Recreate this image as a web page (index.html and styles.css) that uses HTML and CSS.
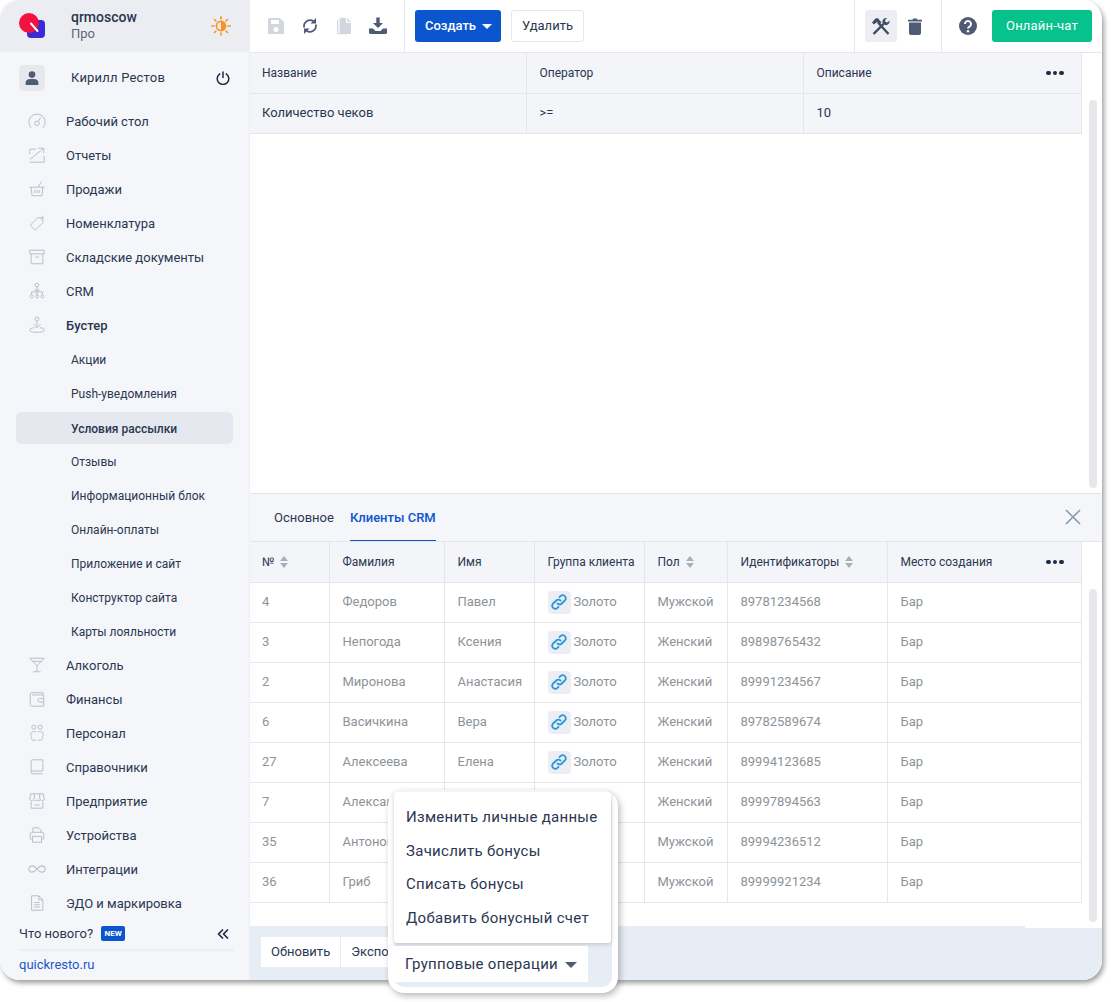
FILE: index.html
```html
<!DOCTYPE html>
<html lang="ru">
  <head>
    <meta charset="UTF-8" />
    <title>Условия рассылки</title>
    <link rel="stylesheet" href="styles.css">
  </head>
  <body>
    <div class="app">
      <aside class="sidebar">
        <div class="brand">
          <svg class="logo" width="30" height="30" viewBox="0 0 30 30">
            <rect x="8" y="8" width="18" height="18" rx="4" fill="#3a2bd6"/>
            <circle cx="10" cy="11" r="10" fill="#f3123f"/>
            <path d="M12 11.500 18.500 19" stroke="#fff" stroke-width="2" stroke-linecap="round"/>
          </svg>
          <div class="brand-text">
            <div class="brand-name">qrmoscow</div>
            <div class="brand-plan">Про</div>
          </div>
          <svg class="sun" width="20" height="20" viewBox="0 0 20 20">
            <circle cx="10" cy="10" r="4.600" fill="none" stroke="#f7931e" stroke-width="1.600"/>
            <path d="M10 5.400a4.600 4.600 0 0 1 0 9.200z" fill="#f7931e"/>
            <path d="M10 .8v2.200M10 17v2.200M.8 10H3M17 10h2.200M3.500 3.500 5 5M15 15l1.500 1.500M3.500 16.500 5 15M15 5l1.500-1.500" stroke="#f7931e" stroke-width="1.600" stroke-linecap="round"/>
          </svg>
        </div>
        <div class="user">
          <div class="avatar">
            <svg width="14" height="14" viewBox="0 0 14 14" fill="#4f5b75"><circle cx="7" cy="3.600" r="3.300"/><path d="M0.600 14v-2.200C.6 9.400 2.600 8 5 8h4c2.400 0 4.400 1.400 4.400 3.800V14z"/></svg>
          </div>
          <span class="user-name">Кирилл Рестов</span>
          <svg width="14" height="14" viewBox="0 0 14 14" fill="none" stroke="#1f2a44" stroke-width="1.500" stroke-linecap="round"><path d="M7 1v5.500"/><path d="M3.800 2.800a5.800 5.800 0 1 0 6.400 0"/></svg>
        </div>
        <nav class="nav">
          <a class="nav-item">
            <svg class="nav-icon" viewBox="0 0 20 20"><path d="M3.500 17.500a9 9 0 1 1 13 0"/><circle cx="10" cy="12.500" r="2.500"/><path d="M11.500 10.500 14 6"/></svg>Рабочий стол
          </a>
          <a class="nav-item">
            <svg class="nav-icon" viewBox="0 0 20 20"><path d="M2 9V3.500h7M2 15 17 3M11.500 2.500h6V8M18 11v7H2"/></svg>Отчеты
          </a>
          <a class="nav-item">
            <svg class="nav-icon" viewBox="0 0 20 20"><path d="M1.500 8h17M3.500 8l1 9.500h11l1-9.500M7.500 11v3.500M10 11v3.500M12.500 11v3.500M11 8l4-6"/></svg>Продажи
          </a>
          <a class="nav-item">
            <svg class="nav-icon" viewBox="0 0 20 20"><path d="M2.500 12.500 11 4h5.500v5.500L8 18zM14 6.500c1-1 3-3 3-4.500"/></svg>Номенклатура
          </a>
          <a class="nav-item">
            <svg class="nav-icon" viewBox="0 0 20 20"><path d="M2 2.500h16v4H2zM3.500 6.500v11h13v-11M8 10h4"/></svg>Складские документы
          </a>
          <a class="nav-item">
            <svg class="nav-icon" viewBox="0 0 20 20"><circle cx="10" cy="3.500" r="2"/><circle cx="4" cy="16" r="1.700"/><circle cx="10" cy="16" r="1.700"/><circle cx="16" cy="16" r="1.700"/><path d="M10 5.500v8.800M4 14.300v-3.300h12v3.300M7 9h6"/></svg>CRM
          </a>
          <a class="nav-item nav-item-open">
            <svg class="nav-icon" viewBox="0 0 20 20"><circle cx="10" cy="3.500" r="2.200"/><path d="M10 6v7M6 9l4 4 4-4M7 13c-3 0-5 1.500-5 2.800S4 18 7 18h6c3 0 5-.900 5-2.200S16 13 13 13"/></svg>Бустер
          </a>
          <a class="nav-sub">Акции</a>
          <a class="nav-sub">Push-уведомления</a>
          <a class="nav-sub nav-sub-active">Условия рассылки</a>
          <a class="nav-sub">Отзывы</a>
          <a class="nav-sub">Информационный блок</a>
          <a class="nav-sub">Онлайн-оплаты</a>
          <a class="nav-sub">Приложение и сайт</a>
          <a class="nav-sub">Конструктор сайта</a>
          <a class="nav-sub">Карты лояльности</a>
          <a class="nav-item">
            <svg class="nav-icon" viewBox="0 0 20 20"><path d="M2 2.500h16L10 11zM10 11v6.500M6 17.500h8M5 6h10"/></svg>Алкоголь
          </a>
          <a class="nav-item">
            <svg class="nav-icon" viewBox="0 0 20 20"><path d="M2.500 5.500a2 2 0 0 1 2-2.500h12v2.500M2.500 5v11a2 2 0 0 0 2 2h13V5.500H4.500M17.500 9.500H13a1.800 1.800 0 0 0 0 4h4.500"/></svg>Финансы
          </a>
          <a class="nav-item">
            <svg class="nav-icon" viewBox="0 0 20 20"><circle cx="6.500" cy="3.500" r="2.300"/><circle cx="13.500" cy="3.500" r="2.300"/><path d="M9 8.500H6a3 3 0 0 0-3 3c0 1 .5 2 1 2.500-.5 1-.5 4 2.500 4H9M11 8.500h3a3 3 0 0 1 3 3c0 1-.5 2-1 2.500.5 1 .5 4-2.500 4H11"/></svg>Персонал
          </a>
          <a class="nav-item">
            <svg class="nav-icon" viewBox="0 0 20 20"><path d="M3.500 15V3.500a1.500 1.500 0 0 1 1.500-1.500h11.500v12.500H5A1.500 1.500 0 0 0 3.500 16 1.500 1.500 0 0 0 5 17.500h11.500"/></svg>Справочники
          </a>
          <a class="nav-item">
            <svg class="nav-icon" viewBox="0 0 20 20"><path d="M3 2h14l1 6c0 2-3 2-4 .500-1 1.500-3 1.500-4 0-1 1.500-3 1.500-4 0-1 1.500-4 1.500-4-.500zM7 2v6M13 2v6M3.500 11v7h13v-7M7 14.500h6"/></svg>Предприятие
          </a>
          <a class="nav-item">
            <svg class="nav-icon" viewBox="0 0 20 20"><path d="M5.500 7V2h6l3 2.500V7M5 14.500H2.500V8.500A1.500 1.500 0 0 1 4 7h12a1.500 1.500 0 0 1 1.500 1.500v6H15M5 11.500h10V18H5z"/></svg>Устройства
          </a>
          <a class="nav-item">
            <svg class="nav-icon nav-icon-wide" viewBox="0 0 20 20"><path d="M10 10C8 7.500 6.500 6.800 5 6.800a3.200 3.200 0 0 0 0 6.400c1.500 0 3-.700 5-3.200s3.500-3.200 5-3.200a3.200 3.200 0 0 1 0 6.400c-1.500 0-3-.700-5-3.200z"/></svg>Интеграции
          </a>
          <a class="nav-item">
            <svg class="nav-icon" viewBox="0 0 20 20"><path d="M4 2h8l4.500 4.500V18H4zM12 2v4.500h4.500M7 9.500h6M7 12h6M7 14.500h6"/></svg>ЭДО и маркировка
          </a>
        </nav>
        <div class="sidebar-foot">
          <div class="news">
            <span>Что нового?</span>
            <span class="badge-new">NEW</span>
            <svg class="collapse" width="12" height="10" viewBox="0 0 12 10" fill="none" stroke="#1f2a44" stroke-width="1.700" stroke-linecap="round" stroke-linejoin="round"><path d="M5.500 1 1.500 5l4 4M10.500 1l-4 4 4 4"/></svg>
          </div>
          <a class="site-link">quickresto.ru</a>
        </div>
      </aside>

      <main class="main">
        <header class="toolbar">
          <div class="tool-group tool-group-left">
            <svg class="tool" width="18" height="18" viewBox="0 0 18 18" fill="#d3d7dd"><path d="M2.500 1h10.500L17 5v10.500a1.500 1.500 0 0 1-1.500 1.500h-13A1.500 1.500 0 0 1 1 15.500v-13A1.500 1.500 0 0 1 2.500 1zM4 3v4h8V3zm5 7a2.500 2.500 0 1 0 0 5 2.500 2.500 0 0 0 0-5z" fill-rule="evenodd"/></svg>
            <svg class="tool" width="18" height="18" viewBox="0 0 18 18" fill="none" stroke="#4f5b75" stroke-width="1.800"><path d="M3.200 10.500A6 6 0 0 1 12.500 4.300M14.800 7.500a6 6 0 0 1-9.300 6.200"/><path d="M15 1v5.500H9.500z" fill="#4f5b75" stroke="none"/><path d="M3 17v-5.500h5.500z" fill="#4f5b75" stroke="none"/></svg>
            <svg class="tool" width="18" height="18" viewBox="0 0 18 18" fill="#d3d7dd"><path d="M2 3h1.200v13H12v1.200H3a1 1 0 0 1-1-1z"/><path d="M5.500 .8h5.500V6h5v10a1 1 0 0 1-1 1H5.500a1 1 0 0 1-1-1V1.800a1 1 0 0 1 1-1z"/><path d="M12.200 .8 16 4.800h-3.800z"/></svg>
            <svg class="tool" width="18" height="18" viewBox="0 0 18 18" fill="#4f5b75"><path d="M7.300 .5h3.400v5.500H14l-5 5-5-5h3.300z"/><path d="M0 11.500h4l2.500 2.500h5L14 11.500h4v4a1.500 1.500 0 0 1-1.500 1.500h-15A1.500 1.500 0 0 1 0 15.500z"/></svg>
          </div>
          <div class="tool-group tool-group-actions">
            <button class="btn btn-primary">Создать<span class="caret"></span></button>
            <button class="btn btn-plain">Удалить</button>
          </div>
          <div class="tool-group tool-group-right">
            <div class="tool-active">
              <svg width="20" height="20" viewBox="0 0 20 20" fill="none" stroke="#3f4a63"><path d="M7 6.500 17.500 18" stroke-width="2.400"/><path d="M1 6.500 3 8.500 6 6l2.500 2.500 2-2-2.500-3C7.500 2 5 1.500 3.500 3.500z" fill="#3f4a63" stroke="none"/><path d="M2.500 18 13 7.500" stroke-width="2.400"/><path d="M11.500 6.500c-.5-3 2-5 4.500-4.500l-2 2 .5 2 2 .5 2-2c.5 2.500-1.500 5-4.500 4.500z" fill="#3f4a63" stroke="none"/></svg>
            </div>
            <svg class="trash" width="14" height="17" viewBox="0 0 14 17" fill="#4f5b75"><path d="M1 4.500h12V15a2 2 0 0 1-2 2H3a2 2 0 0 1-2-2z"/><path d="M0 1.800h4.500L5.200 .500h3.600l.7 1.300H14V3.500H0z"/></svg>
          </div>
          <div class="tool-group tool-group-help">
            <svg width="18" height="18" viewBox="0 0 18 18"><circle cx="9" cy="9" r="9" fill="#4f5b75"/><path d="M6 7a3 3 0 1 1 4.600 2.500C9.500 10.200 9 10.700 9 11.500" fill="none" stroke="#fff" stroke-width="2"/><circle cx="9" cy="14.200" r="1.200" fill="#fff"/></svg>
            <button class="btn btn-chat">Онлайн-чат</button>
          </div>
        </header>

        <section class="pane-top">
          <table class="grid grid-top">
            <colgroup><col class="w-276"><col class="w-277"><col class="w-278"></colgroup>
            <thead>
              <tr><th>Название</th><th>Оператор</th><th><div class="th-more">Описание<span class="dots"><i></i><i></i><i></i></span></div></th></tr>
            </thead>
            <tbody>
              <tr class="row-selected"><td>Количество чеков</td><td>&gt;=</td><td>10</td></tr>
            </tbody>
          </table>
          <div class="thumb thumb-top"></div>
        </section>

        <section class="details">
          <div class="tabs">
            <a class="tab">Основное</a>
            <a class="tab tab-active">Клиенты CRM</a>
            <svg class="close" width="16" height="16" viewBox="0 0 16 16" fill="none" stroke="#8b9cac" stroke-width="1.700"><path d="M1 1l14 14M15 1 1 15"/></svg>
          </div>
          <div class="pane-bottom">
            <table class="grid grid-clients">
              <colgroup><col class="w-79"><col class="w-115"><col class="w-90"><col class="w-110"><col class="w-83"><col class="w-160"><col class="w-194"></colgroup>
              <thead>
                <tr>
                  <th>№<span class="sort"></span></th>
                  <th>Фамилия</th>
                  <th>Имя</th>
                  <th>Группа клиента</th>
                  <th>Пол<span class="sort"></span></th>
                  <th>Идентификаторы<span class="sort"></span></th>
                  <th><div class="th-more">Место создания<span class="dots"><i></i><i></i><i></i></span></div></th>
                </tr>
              </thead>
              <tbody>
                <tr><td>4</td><td>Федоров</td><td>Павел</td><td><span class="link-cell"><span class="link-badge"><svg width="18" height="18" viewBox="0 0 18 18" fill="none" stroke="#2a9ad8" stroke-width="1.800" stroke-linecap="round"><path d="M7.500 10.500a3 3 0 0 0 4.300 0l3-3a3 3 0 0 0-4.300-4.300L9.500 4.200"/><path d="M10.500 7.500a3 3 0 0 0-4.300 0l-3 3a3 3 0 0 0 4.300 4.300l1-1"/></svg></span>Золото</span></td><td>Мужской</td><td>89781234568</td><td>Бар</td></tr>
                <tr><td>3</td><td>Непогода</td><td>Ксения</td><td><span class="link-cell"><span class="link-badge"><svg width="18" height="18" viewBox="0 0 18 18" fill="none" stroke="#2a9ad8" stroke-width="1.800" stroke-linecap="round"><path d="M7.500 10.500a3 3 0 0 0 4.300 0l3-3a3 3 0 0 0-4.300-4.300L9.500 4.200"/><path d="M10.500 7.500a3 3 0 0 0-4.300 0l-3 3a3 3 0 0 0 4.300 4.300l1-1"/></svg></span>Золото</span></td><td>Женский</td><td>89898765432</td><td>Бар</td></tr>
                <tr><td>2</td><td>Миронова</td><td>Анастасия</td><td><span class="link-cell"><span class="link-badge"><svg width="18" height="18" viewBox="0 0 18 18" fill="none" stroke="#2a9ad8" stroke-width="1.800" stroke-linecap="round"><path d="M7.500 10.500a3 3 0 0 0 4.300 0l3-3a3 3 0 0 0-4.300-4.300L9.500 4.200"/><path d="M10.500 7.500a3 3 0 0 0-4.300 0l-3 3a3 3 0 0 0 4.300 4.300l1-1"/></svg></span>Золото</span></td><td>Женский</td><td>89991234567</td><td>Бар</td></tr>
                <tr><td>6</td><td>Васичкина</td><td>Вера</td><td><span class="link-cell"><span class="link-badge"><svg width="18" height="18" viewBox="0 0 18 18" fill="none" stroke="#2a9ad8" stroke-width="1.800" stroke-linecap="round"><path d="M7.500 10.500a3 3 0 0 0 4.300 0l3-3a3 3 0 0 0-4.300-4.300L9.500 4.200"/><path d="M10.500 7.500a3 3 0 0 0-4.300 0l-3 3a3 3 0 0 0 4.300 4.300l1-1"/></svg></span>Золото</span></td><td>Женский</td><td>89782589674</td><td>Бар</td></tr>
                <tr><td>27</td><td>Алексеева</td><td>Елена</td><td><span class="link-cell"><span class="link-badge"><svg width="18" height="18" viewBox="0 0 18 18" fill="none" stroke="#2a9ad8" stroke-width="1.800" stroke-linecap="round"><path d="M7.500 10.500a3 3 0 0 0 4.300 0l3-3a3 3 0 0 0-4.300-4.300L9.500 4.200"/><path d="M10.500 7.500a3 3 0 0 0-4.300 0l-3 3a3 3 0 0 0 4.300 4.300l1-1"/></svg></span>Золото</span></td><td>Женский</td><td>89994123685</td><td>Бар</td></tr>
                <tr><td>7</td><td>Александрова</td><td></td><td></td><td>Женский</td><td>89997894563</td><td>Бар</td></tr>
                <tr><td>35</td><td>Антонов</td><td></td><td></td><td>Мужской</td><td>89994236512</td><td>Бар</td></tr>
                <tr><td>36</td><td>Гриб</td><td></td><td></td><td>Мужской</td><td>89999921234</td><td>Бар</td></tr>
              </tbody>
            </table>
            <div class="thumb thumb-bottom"></div>
          </div>
          <footer class="actions-bar">
            <div class="btn-row">
              <button class="bar-btn">Обновить</button>
              <button class="bar-btn">Экспорт</button>
            </div>
          </footer>
        </section>
      </main>

      <div class="highlight">
        <ul class="menu">
          <li>Изменить личные данные</li>
          <li>Зачислить бонусы</li>
          <li>Списать бонусы</li>
          <li>Добавить бонусный счет</li>
        </ul>
        <button class="group-btn">Групповые операции<span class="caret caret-grey"></span></button>
      </div>
    </div>
  </body>
</html>
```
FILE: styles.css
```css
:root {
  --ink: #2b3650;
  --muted: #8d9398;
  --line: #e4e6ea;
  --panel: #f4f6fa;
  --blue: #0b55cf;
}
* {
  box-sizing: border-box;
  margin: 0;
  padding: 0;
}
body {
  font-family: Roboto, "Liberation Sans", sans-serif;
  font-size: 13px;
  color: var(--ink);
  background: #fff;
  min-height: 1002px;
}
.app {
  position: relative;
  display: flex;
  width: 1102px;
  height: 980px;
  border-radius: 20px;
  box-shadow: 2px 3px 5px rgba(60, 60, 60, 0.5);
}

/* sidebar */
.sidebar {
  display: flex;
  flex-direction: column;
  width: 250px;
  flex-shrink: 0;
  background: var(--panel);
  border-right: 1px solid #eceef2;
  border-radius: 20px 0 0 20px;
  overflow: hidden;
}
.brand {
  display: flex;
  align-items: center;
  height: 52px;
  padding: 0 19px;
  background: #ecedf2;
}
.logo {
  flex-shrink: 0;
  margin-top: 2px;
}
.brand-text {
  margin-left: 22px;
  margin-top: -2px;
  flex: 1;
}
.brand-name {
  font-size: 14px;
  font-weight: 500;
  line-height: 17px;
}
.brand-plan {
  color: #5d6678;
  line-height: 16px;
}
.sun {
  margin-right: -1px;
}
.user {
  display: flex;
  align-items: center;
  height: 26px;
  margin-top: 13px;
  padding: 0 19px;
}
.avatar {
  display: flex;
  align-items: center;
  justify-content: center;
  width: 26px;
  height: 26px;
  border-radius: 5px;
  background: #e6e8ee;
}
.user-name {
  flex: 1;
  margin-left: 26px;
  margin-top: -2px;
  letter-spacing: 0.2px;
}
.nav {
  margin-top: 13px;
  flex: 1;
}
.nav-item {
  display: flex;
  align-items: center;
  height: 34px;
  padding-left: 28px;
}
.nav-item-open {
  font-weight: 500;
}
.nav-icon {
  width: 18px;
  height: 18px;
  margin-right: 20px;
  flex-shrink: 0;
  fill: none;
  stroke: #b9bec8;
  stroke-width: 1.100;
}
.nav-icon-wide {
  transform: scale(1.100);
}
.nav-sub {
  display: flex;
  align-items: center;
  height: 34px;
  padding: 1px 0 0 71px;
  font-size: 12px;
}
.nav-sub-active {
  height: 32px;
  margin: 2px 16px 0;
  padding-left: 55px;
  width: 217px;
  border-radius: 5px;
  background: #e6e8ef;
  font-weight: 500;
}
.sidebar-foot {
  margin: 0 15px 0 19px;
  height: 59px;
}
.news {
  display: flex;
  align-items: center;
  height: 30px;
  border-bottom: 2px solid #eceef3;
  padding-bottom: 3px;
}
.badge-new {
  margin-left: 8px;
  width: 24px;
  height: 15px;
  line-height: 15px;
  border-radius: 2px;
  background: var(--blue);
  color: #fff;
  font-size: 8px;
  font-weight: 700;
  text-align: center;
}
.collapse {
  margin-left: auto;
  margin-right: 5px;
}
.site-link {
  display: block;
  margin-top: 6px;
  color: #1b56c9;
}

/* main column */
.main {
  display: flex;
  flex-direction: column;
  flex: 1;
  min-width: 0;
  background: #fff;
  border-radius: 0 20px 20px 0;
  overflow: hidden;
}
.toolbar {
  display: flex;
  height: 53px;
  flex-shrink: 0;
  border-bottom: 1px solid var(--line);
}
.tool-group {
  display: flex;
  align-items: center;
  height: 52px;
  border-right: 1px solid var(--line);
}
.tool-group-left {
  width: 155px;
  padding-left: 17px;
  gap: 16px;
}
.tool-group-actions {
  width: 450px;
  padding-left: 10px;
  gap: 10px;
}
.tool-group-right {
  width: 87px;
  padding-left: 10px;
  gap: 11px;
}
.tool-group-help {
  flex: 1;
  border-right: none;
  padding-left: 17px;
  gap: 15px;
}
.tool {
  flex-shrink: 0;
}
.tool-active {
  display: flex;
  align-items: center;
  justify-content: center;
  width: 32px;
  height: 32px;
  border-radius: 3px;
  background: #eceef3;
}
.btn {
  display: flex;
  align-items: center;
  justify-content: center;
  height: 32px;
  padding-bottom: 2px;
  border: none;
  border-radius: 3px;
  font-family: inherit;
  font-size: 13px;
}
.btn-primary {
  width: 86px;
  padding-left: 1px;
  background: var(--blue);
  color: #fff;
  font-weight: 500;
}
.btn-plain {
  width: 73px;
  background: #fff;
  border: 1px solid var(--line);
  color: var(--ink);
}
.btn-chat {
  width: 100px;
  background: #08c28d;
  color: #fff;
  letter-spacing: 0.2px;
}
.caret {
  display: inline-block;
  margin-left: 6px;
  margin-top: 2px;
  border-left: 5px solid transparent;
  border-right: 5px solid transparent;
  border-top: 5px solid #fff;
}
.caret-grey {
  margin-left: 7px;
  border-left-width: 6px;
  border-right-width: 6px;
  border-top: 6px solid #4f5b75;
}

/* tables */
.pane-top {
  display: flex;
  height: 441px;
  flex-shrink: 0;
  border-bottom: 1px solid var(--line);
}
.grid {
  width: 831px;
  flex-shrink: 0;
  align-self: flex-start;
  table-layout: fixed;
  border-collapse: collapse;
}
.w-276 { width: 276px; }
.w-277 { width: 277px; }
.w-278 { width: 278px; }
.w-79 { width: 79px; }
.w-115 { width: 115px; }
.w-90 { width: 90px; }
.w-110 { width: 110px; }
.w-83 { width: 83px; }
.w-160 { width: 160px; }
.w-194 { width: 194px; }
.grid th,
.grid td {
  height: 40px;
  padding: 0 12px 0 13px;
  text-align: left;
  white-space: nowrap;
  overflow: hidden;
  border: 1px solid var(--line);
  border-top: none;
  border-left: none;
}
.grid td {
  padding-bottom: 2px;
}
.grid th:first-child,
.grid td:first-child {
  padding-left: 12px;
}
.grid th {
  background: #f3f5f9;
  font-size: 12px;
  font-weight: 400;
}
.grid-clients td {
  color: var(--muted);
}
.row-selected td {
  background: #f3f5f9;
}
.th-more {
  display: flex;
  align-items: center;
  justify-content: space-between;
}
.dots {
  display: flex;
  gap: 2px;
  margin-right: 5px;
}
.dots i {
  width: 4.500px;
  height: 4.500px;
  border-radius: 50%;
  background: #1f2a44;
}
.sort {
  display: inline-block;
  position: relative;
  width: 9px;
  height: 12px;
  margin-left: 6px;
  vertical-align: -2px;
}
.sort::before,
.sort::after {
  content: "";
  position: absolute;
  left: 0;
  border-left: 4px solid transparent;
  border-right: 4px solid transparent;
}
.sort::before {
  top: 0;
  border-bottom: 5px solid #a9afb9;
}
.sort::after {
  bottom: 0;
  border-top: 5px solid #a9afb9;
}
.link-cell {
  display: flex;
  align-items: center;
  gap: 3px;
}
.link-badge {
  display: flex;
  align-items: center;
  justify-content: center;
  width: 23px;
  height: 23px;
  margin-top: 2px;
  border-radius: 4px;
  background: #eceef3;
}
.thumb {
  width: 8px;
  margin-left: 7px;
  border-radius: 4px;
  background: #e6e8ec;
}
.thumb-top {
  height: 388px;
  margin-top: 47px;
}
.thumb-bottom {
  height: 333px;
  margin-top: 47px;
}

/* details */
.details {
  display: flex;
  flex-direction: column;
  flex: 1;
  min-height: 0;
}
.tabs {
  display: flex;
  align-items: stretch;
  height: 48px;
  flex-shrink: 0;
  padding-left: 24px;
  gap: 16px;
  background: var(--panel);
  border-bottom: 1px solid var(--line);
}
.tab {
  display: flex;
  align-items: center;
  padding-bottom: 1px;
}
.tab-active {
  padding-bottom: 0;
  color: var(--blue);
  font-weight: 500;
  border-bottom: 1px solid var(--blue);
}
.close {
  margin: 15px 21px 0 auto;
}
.pane-bottom {
  display: flex;
  height: 384px;
  flex-shrink: 0;
}
.actions-bar {
  position: relative;
  flex: 1;
  padding: 11px;
  background: #e7edf4;
}
.actions-bar::after {
  content: "";
  position: absolute;
  top: 0;
  right: 0;
  width: 77px;
  height: 2px;
  background: #fff;
}
.btn-row {
  display: flex;
  gap: 1px;
}
.bar-btn {
  height: 30px;
  padding: 0 10px 2px;
  border: none;
  background: #fff;
  font-family: inherit;
  font-size: 13px;
  color: var(--ink);
}

/* menu callout, sits over the bottom bar */
.highlight {
  position: absolute;
  left: 388px;
  top: 790px;
  display: flex;
  flex-direction: column;
  width: 230px;
  height: 203px;
  background: #e7edf4;
  border: 6px solid #fff;
  border-top-width: 2px;
  border-radius: 16px;
  box-shadow: 2px 3px 6px rgba(60, 60, 60, 0.35);
}
.menu {
  list-style: none;
  width: 217px;
  height: 151px;
  padding-top: 9px;
  background: #fff;
  border-radius: 3px;
  box-shadow: 0 1px 4px rgba(60, 60, 60, 0.25);
}
.menu li {
  height: 33.500px;
  line-height: 33.500px;
  padding-left: 12px;
  font-size: 15px;
  letter-spacing: 0.28px;
}
.group-btn {
  display: flex;
  align-items: center;
  justify-content: center;
  width: 194px;
  height: 36px;
  margin-top: 3px;
  border: none;
  background: #fff;
  font-family: inherit;
  font-size: 15px;
  letter-spacing: 0.28px;
  color: var(--ink);
}
```
